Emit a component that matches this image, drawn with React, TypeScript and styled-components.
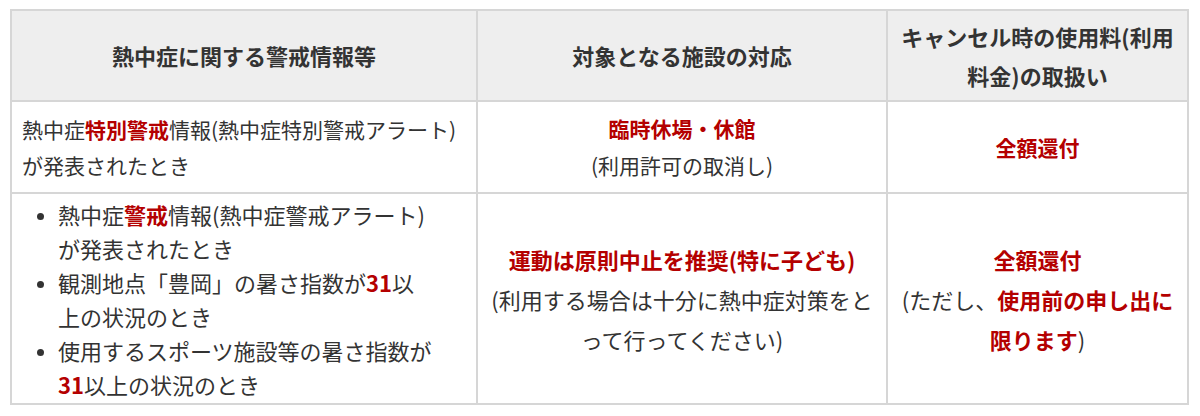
import React from 'react'
import styled, { createGlobalStyle } from 'styled-components'

const GlobalStyle = createGlobalStyle`
  html, body {
    margin: 0;
    padding: 0;
    background: #ffffff;
  }
  body {
    font-family: "Noto Sans CJK JP", "Noto Sans", sans-serif;
    color: #333333;
  }
`

const Page = styled.div`
  padding: 9px 0 0 10px;
`

const Table = styled.table`
  width: 1177px;
  table-layout: fixed;
  border-collapse: collapse;
  border: 2px solid #d6d6d6;
`

const Column = styled.col<{ $width: number }>`
  width: ${({ $width }) => $width}px;
`

const Row = styled.tr<{ $height: number }>`
  height: ${({ $height }) => $height}px;
`

const HeadCell = styled.th`
  background: #eeeeee;
  border: 2px solid #d6d6d6;
  padding: 4px 4px;
  font-size: 22px;
  line-height: 39px;
  font-weight: 700;
  color: #333333;
  text-align: center;
  vertical-align: middle;
  white-space: nowrap;
  overflow: visible;
`

const Cell = styled.td<{ $align?: 'left' | 'center'; $size: number; $lh: number }>`
  border: 2px solid #d6d6d6;
  padding: 2px ${({ $align }) => ($align === 'left' ? '10px' : '4px')};
  font-size: ${({ $size }) => $size}px;
  line-height: ${({ $lh }) => $lh}px;
  text-align: ${({ $align }) => $align || 'center'};
  vertical-align: middle;
  white-space: nowrap;
  color: #333333;
`

const Em = styled.strong`
  color: #b40000;
  font-weight: 700;
`

const BulletList = styled.ul`
  margin: 0;
  padding: 0 0 0 36px;
  list-style: disc;
`

const Item = styled.li`
  &::marker {
    font-size: 18px;
  }
`

export default function App() {
  return (
    <Page>
      <GlobalStyle />
      <Table>
        <colgroup>
          <Column $width={466} />
          <Column $width={410} />
          <Column $width={301} />
        </colgroup>
        <thead>
          <Row $height={91}>
            <HeadCell>熱中症に関する警戒情報等</HeadCell>
            <HeadCell>対象となる施設の対応</HeadCell>
            <HeadCell>
              キャンセル時の使用料(利用
              <br />
              料金)の取扱い
            </HeadCell>
          </Row>
        </thead>
        <tbody>
          <Row $height={92}>
            <Cell $align="left" $size={21} $lh={36}>
              熱中症<Em>特別警戒</Em>情報(熱中症特別警戒アラート)
              <br />
              が発表されたとき
            </Cell>
            <Cell $size={21} $lh={37}>
              <Em>臨時休場・休館</Em>
              <br />
              (利用許可の取消し)
            </Cell>
            <Cell $size={21} $lh={37}>
              <Em>全額還付</Em>
            </Cell>
          </Row>
          <Row $height={211}>
            <Cell $align="left" $size={22} $lh={34}>
              <BulletList>
                <Item>
                  熱中症<Em>警戒</Em>情報(熱中症警戒アラート)
                  <br />
                  が発表されたとき
                </Item>
                <Item>
                  観測地点「豊岡」の暑さ指数が<Em>31</Em>以
                  <br />
                  上の状況のとき
                </Item>
                <Item>
                  使用するスポーツ施設等の暑さ指数が
                  <br />
                  <Em>31</Em>以上の状況のとき
                </Item>
              </BulletList>
            </Cell>
            <Cell $size={22} $lh={40}>
              <Em>運動は原則中止を推奨(特に子ども)</Em>
              <br />
              (利用する場合は十分に熱中症対策をと
              <br />
              って行ってください)
            </Cell>
            <Cell $size={22} $lh={40}>
              <Em>全額還付</Em>
              <br />
              (ただし、<Em>使用前の申し出に</Em>
              <br />
              <Em>限ります</Em>)
            </Cell>
          </Row>
        </tbody>
      </Table>
    </Page>
  )
}
